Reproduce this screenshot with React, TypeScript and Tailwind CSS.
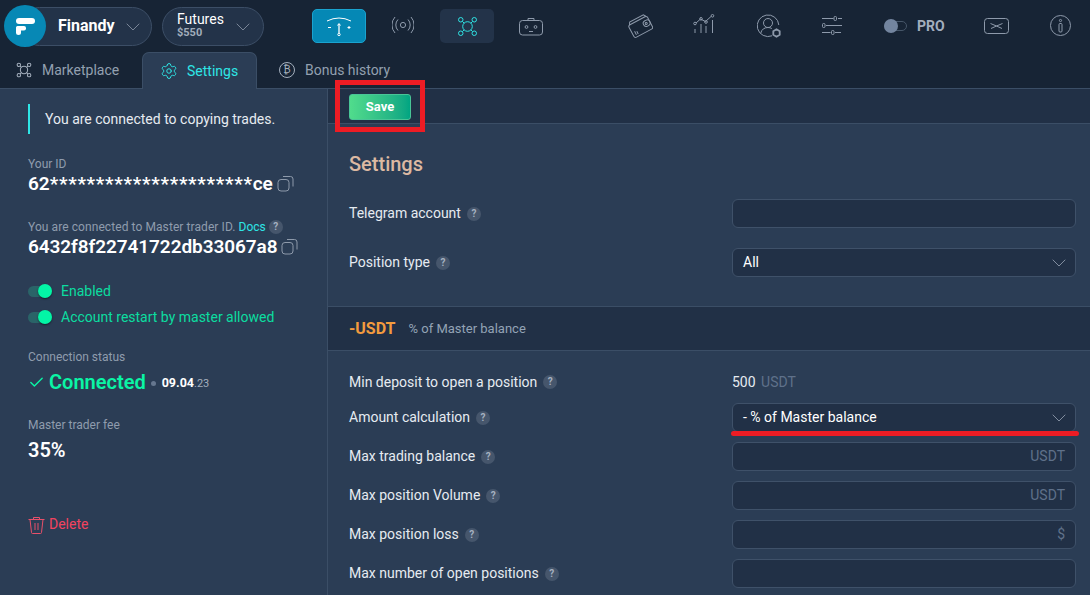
import React from 'react';
import { ChevronDown, Check, Settings as SettingsIcon } from 'lucide-react';

const Help = () => (
  <span className="ml-[6px] inline-flex h-[14px] w-[14px] shrink-0 items-center justify-center rounded-full bg-[#46566c] text-[10px] font-bold leading-none text-[#a5b1c1]">
    ?
  </span>
);

const CopyIcon = () => (
  <svg width="17" height="17" viewBox="0 0 17 17" fill="none" stroke="#8e9aab" strokeWidth="1">
    <rect x="1" y="4.5" width="11" height="11.5" rx="3" />
    <path d="M6 1.5h7.5a2.5 2.5 0 0 1 2.5 2.5v7.5" />
  </svg>
);

const Toggle = () => (
  <span className="relative block h-[11px] w-[24px] shrink-0 rounded-full bg-[#2a6468]">
    <span className="absolute right-0 top-[-2px] h-[14px] w-[14px] rounded-full bg-[#03f5a6] shadow-[0_1px_2px_rgba(0,0,0,0.5)]" />
  </span>
);

const NetIcon = ({ size = 28, color = '#2ee6e6', width = 1.3 }: { size?: number; color?: string; width?: number }) => (
  <svg width={size} height={size} viewBox="0 0 28 28" fill="none" stroke={color} strokeWidth={width}>
    <circle cx="5" cy="5" r="3" />
    <circle cx="23" cy="5" r="3" />
    <circle cx="5" cy="23" r="3" />
    <circle cx="23" cy="23" r="3" />
    <path d="M7.2 7.2 9.5 9.5M20.8 7.2 18.5 9.5M7.2 20.8 9.5 18.5M20.8 20.8 18.5 18.5" />
    <circle cx="14" cy="14" r="6.4" />
  </svg>
);

const FormRow = ({
  label,
  children,
  className = '',
}: {
  label: string;
  children?: React.ReactNode;
  className?: string;
}) => (
  <div className={`flex h-[29px] items-center justify-between ${className}`}>
    <div className="flex items-center text-[14px] text-[#e6ebf1]">
      {label}
      <Help />
    </div>
    <div className="w-[344px]">{children}</div>
  </div>
);

const Field = ({ suffix, children }: { suffix?: string; children?: React.ReactNode }) => (
  <div className="flex h-[29px] items-center justify-between rounded-[6px] border border-[#3f5169] bg-[#213046] px-[10px] text-[14px]">
    <span className="text-white">{children}</span>
    {suffix && <span className="text-[#5f718a]">{suffix}</span>}
  </div>
);

const SelectField = ({ value }: { value: string }) => (
  <div className="flex h-[29px] items-center justify-between rounded-[6px] border border-[#3f5169] bg-[#213046] pl-[10px] pr-[4px] text-[14px] text-white">
    <span>{value}</span>
    <ChevronDown size={24} strokeWidth={0.8} color="#9aa6b6" />
  </div>
);

const TopBar = () => (
  <header className="h-[89px] shrink-0 border-b border-[#3b4e66] bg-[#172435]">
    <div className="flex h-[52px] items-center pl-[4px]">
      <div className="relative z-10 flex h-[42px] w-[42px] shrink-0 items-center justify-center rounded-full bg-[#0788b5]">
        <svg width="19" height="17" viewBox="0 0 19 17" fill="white">
          <rect x="0" y="0" width="19" height="6" rx="3" />
          <rect x="0" y="8" width="10" height="4.5" rx="2" />
          <rect x="0" y="8" width="5" height="9" rx="2.5" />
        </svg>
      </div>
      <div className="ml-[-26px] mt-[1px] flex h-[39px] w-[132px] items-center justify-between rounded-full border border-[#3c4e66] bg-[#233349] pl-[37px] pr-[6px]">
        <span className="mb-[2px] text-[16px] font-bold text-white">Finandy</span>
        <ChevronDown size={24} strokeWidth={0.8} color="#8f9bab" />
      </div>
      <div className="ml-[10px] mt-[1px] flex h-[39px] w-[102px] items-center justify-between rounded-full border border-[#3c4e66] bg-[#233349] pl-[14px] pr-[8px]">
        <div className="mb-[3px] flex flex-col leading-none">
          <span className="text-[14px] text-white">Futures</span>
          <span className="mt-[1px] text-[11px] font-bold text-[#a0acbb]">$550</span>
        </div>
        <ChevronDown size={24} strokeWidth={0.8} color="#8f9bab" />
      </div>
      <div className="ml-[48px] flex h-[34px] w-[54px] items-center justify-center rounded-[5px] border border-[#1aa3cf] bg-[#0588b5]">
        <svg width="28" height="22" viewBox="0 0 28 22" fill="none" stroke="white" strokeWidth="1">
          <path d="M2 6Q14 0 26 6" />
          <path d="M14 9v9" strokeWidth="1.3" />
          <path d="M12.5 10.5 14 8.5l1.5 2" />
          <circle cx="14" cy="19.5" r="1.2" />
          <path d="M3 12.5h3M22.5 12.5h3M24 11v3" />
        </svg>
      </div>
      <div className="mb-[2px] ml-[10px] flex w-[54px] justify-center">
        <svg width="22" height="18" viewBox="0 0 22 18" fill="none" stroke="#8e9aab" strokeWidth="1">
          <circle cx="11" cy="9" r="2.6" />
          <path d="M6 3.5a8 8 0 0 0 0 11M16 3.5a8 8 0 0 1 0 11M3 1a12 12 0 0 0 0 16M19 1a12 12 0 0 1 0 16" />
        </svg>
      </div>
      <div className="ml-[10px] flex h-[34px] w-[54px] items-center justify-center rounded-[5px] bg-[#233349]">
        <NetIcon size={21} width={1.3} />
      </div>
      <div className="ml-[10px] flex w-[54px] justify-center">
        <svg width="24" height="19" viewBox="0 0 24 19" fill="none" stroke="#8e9aab" strokeWidth="1">
          <rect x="0.5" y="3.5" width="23" height="14.5" rx="3" />
          <path d="M9 3.5V1.5h6v2" />
          <circle cx="7.5" cy="10" r="1.4" />
          <circle cx="16.5" cy="10" r="1.4" />
          <path d="M10 14.5h4" />
        </svg>
      </div>
      <div className="ml-[69px] flex w-[26px] justify-center">
        <svg width="25" height="25" viewBox="0 0 25 25" fill="none" stroke="#8e9aab" strokeWidth="1">
          <g transform="rotate(-28 12.5 12.5)">
            <rect x="2" y="6" width="21" height="14" rx="2" />
            <path d="M3.5 6 5 3.5h15.5L22 6" />
            <rect x="16" y="9.5" width="7" height="6" rx="3" />
            <circle cx="19" cy="12.5" r="1" />
            <path d="M5 14v4M7 15v3" />
          </g>
        </svg>
      </div>
      <div className="mb-[4px] ml-[38px] flex w-[26px] justify-center">
        <svg width="22" height="20" viewBox="0 0 22 20" fill="none" stroke="#8e9aab" strokeWidth="1">
          <path d="M3 9 7.5 5 12.5 7.5 18 2.5" />
          <circle cx="2" cy="9.5" r="1.3" />
          <circle cx="8" cy="4.8" r="1.3" />
          <circle cx="13" cy="8" r="1.3" />
          <circle cx="19.5" cy="1.8" r="1.3" />
          <path d="M2 15v4M8 10v9M13 12v7M19.5 6v13" />
        </svg>
      </div>
      <div className="ml-[38px] flex w-[28px] justify-center">
        <svg width="24" height="24" viewBox="0 0 24 24" fill="none" stroke="#8e9aab" strokeWidth="1">
          <path d="M15 21.8A10.8 10.8 0 1 1 21.8 11" />
          <circle cx="11" cy="9" r="4.5" />
          <path d="M3.8 19c.8-3.6 3.6-5.5 7.2-5.5 1.4 0 2.7.3 3.8 1" />
          <path d="M19.5 15.3l3.2 1.9v3.6l-3.2 1.9-3.2-1.9v-3.6Z" strokeWidth="1.8" fill="#172435" />
        </svg>
      </div>
      <div className="mb-[2px] ml-[35px] flex w-[28px] justify-center">
        <svg width="20" height="19" viewBox="0 0 20 19" fill="none" stroke="#8e9aab" strokeWidth="1">
          <path d="M0 2.5h11.5M16 2.5h4M4 9.5h16M0 16.5h8.5M13 16.5h6" />
          <rect x="12" y="0.5" width="2.5" height="4" rx="1" />
          <rect x="0.5" y="7.5" width="2.5" height="4" rx="1" />
          <rect x="9.5" y="14.5" width="2.5" height="4" rx="1" />
        </svg>
      </div>
      <div className="ml-[38px] flex items-center">
        <span className="relative block h-[10px] w-[23px] rounded-full border border-[#465669]">
          <span className="absolute left-[-1px] top-[-3px] h-[14px] w-[14px] rounded-full bg-[#73859f]" />
        </span>
        <span className="ml-[10px] text-[14px] font-bold text-[#a3aebd]">PRO</span>
      </div>
      <div className="ml-[39px] flex w-[26px] justify-center">
        <svg width="25" height="16" viewBox="0 0 25 16" fill="none" stroke="#8e9aab" strokeWidth="1">
          <rect x="0.5" y="0.5" width="24" height="15" rx="3" />
          <path d="M6.5 5.5 12.5 8 18.5 5.5M7 10.5l5.5-2.5 5.5 2.5" />
        </svg>
      </div>
      <div className="mb-[2px] ml-[40px] flex w-[22px] justify-center">
        <svg width="21" height="21" viewBox="0 0 21 21" fill="none" stroke="#8e9aab" strokeWidth="1">
          <circle cx="10.5" cy="10.5" r="10" />
          <circle cx="10.5" cy="5.5" r="1.1" />
          <rect x="9" y="8.5" width="3" height="8.5" rx="1" />
        </svg>
      </div>
    </div>
    <nav className="flex h-[36px] items-end text-[14px] leading-none">
      <div className="flex h-[36px] w-[142px] items-center pl-[16px] text-[#93a0b0]">
        <NetIcon size={16} color="#a5b0be" width={1.8} />
        <span className="ml-[10px]">Marketplace</span>
      </div>
      <div className="relative flex h-[37px] w-[115px] translate-y-px items-center rounded-t-[7px] border border-b-0 border-[#3b4e66] bg-[#2b3d55] pl-[17px] text-[#2ee6e6]">
        <SettingsIcon size={18} strokeWidth={1.3} color="#2ee6e6" />
        <span className="ml-[9px]">Settings</span>
      </div>
      <div className="flex h-[36px] items-center pl-[22px] text-[#93a0b0]">
        <span className="flex h-[16px] w-[16px] items-center justify-center rounded-full border border-[#a5b0be] text-[10px] leading-none text-[#a5b0be]">
          ₿
        </span>
        <span className="ml-[10px]">Bonus history</span>
      </div>
    </nav>
  </header>
);

const Sidebar = () => (
  <aside className="w-[328px] shrink-0 border-r border-[#3b4e66] bg-[#2b3d55] pl-[28px] pt-[15px]">
    <div className="flex h-[30px] items-center border-l-2 border-[#2ee6e6] pl-[15px] text-[14px] text-[#e6ebf1]">
      You are connected to copying trades.
    </div>
    <div className="mt-[23px] text-[12px] leading-[14px] text-[#8f9cad]">Your ID</div>
    <div className="mt-[1px] flex h-[22px] items-center text-[19px] font-semibold leading-none text-white">
      62<span className="tracking-[0.7px]">**********************</span>ce
      <span className="ml-[4px]">
        <CopyIcon />
      </span>
    </div>
    <div className="mt-[26px] flex items-center text-[12px] leading-[14px] text-[#8f9cad]">
      <span className="tracking-[0.08px]">You are connected to Master trader ID.</span>
      <span className="ml-[3px] mr-[-3px] text-[#2ee6e6]">Docs</span>
      <Help />
    </div>
    <div className="mt-[1px] flex h-[22px] items-center text-[19px] font-semibold leading-none tracking-[-0.08px] text-white">
      6432f8f22741722db33067a8
      <span className="ml-[4px]">
        <CopyIcon />
      </span>
    </div>
    <div className="mt-[21px] flex h-[26px] items-center gap-[9px] text-[14px] text-[#0bdda0]">
      <Toggle />
      Enabled
    </div>
    <div className="flex h-[26px] items-center gap-[9px] text-[14px] text-[#0bdda0]">
      <Toggle />
      Account restart by master allowed
    </div>
    <div className="mt-[20px] text-[12px] leading-[14px] text-[#8f9cad]">Connection status</div>
    <div className="mt-[6px] flex h-[24px] items-center">
      <Check size={17} strokeWidth={2} color="#0af5a5" />
      <span className="ml-[4px] text-[20px] font-semibold leading-none text-[#0af5a5]">Connected</span>
      <span className="ml-[5px] mt-[2px] h-[5px] w-[5px] rounded-full bg-[#66778f]" />
      <span className="ml-[6px] mt-[3px] text-[12.5px] font-bold text-white">
        09.04<span className="text-[11px] font-normal text-[#a3aebd]">.23</span>
      </span>
    </div>
    <div className="mt-[24px] text-[12px] leading-[14px] text-[#8f9cad]">Master trader fee</div>
    <div className="mt-[6px] text-[20px] font-semibold leading-[24px] text-white">35%</div>
    <div className="mt-[52px] flex items-center text-[14px] text-[#f2435f]">
      <svg width="17" height="18" viewBox="0 0 17 18" fill="none" stroke="#e8506a" strokeWidth="1">
        <path d="M0.5 3.5h16M5.5 3.5V1.5h6v2M2 3.5l1.5 13a1 1 0 0 0 1 1h8a1 1 0 0 0 1-1l1.5-13M7 7v7M10 7v7" />
      </svg>
      <span className="ml-[4px]">Delete</span>
    </div>
  </aside>
);

export default function App() {
  return (
    <div className="relative flex h-[595px] w-[1090px] flex-col overflow-hidden bg-[#2b3d55] font-['Roboto',sans-serif]">
      <TopBar />
      <div className="flex min-h-0 flex-1">
        <Sidebar />
        <main className="min-w-0 flex-1">
          <div className="flex h-[35px] items-center border-b border-[#3b4e66] bg-[#213046] pl-[21px] pt-[1px]">
            <button className="flex h-[26px] w-[62px] items-center justify-center rounded-[3px] border border-[#49c597] bg-gradient-to-r from-[#50dc8c] to-[#00a582] text-[13px] font-bold text-white">
              Save
            </button>
          </div>
          <div className="pl-[21px] pr-[14px]">
            <h2 className="mt-[26px] text-[20px] font-medium leading-[28px] text-[#dcb9a2]">Settings</h2>
            <FormRow label="Telegram account" className="mt-[21px]">
              <Field />
            </FormRow>
            <FormRow label="Position type" className="mt-[20px]">
              <SelectField value="All" />
            </FormRow>
          </div>
          <div className="mt-[29px] flex h-[45px] items-center border-y border-[#3b4e66] bg-[#213046] pl-[21px]">
            <span className="text-[16px] font-bold text-[#f39b3e]">-USDT</span>
            <span className="ml-[13px] text-[13px] text-[#93a3b5]">% of Master balance</span>
          </div>
          <div className="flex flex-col gap-[10px] pl-[21px] pr-[14px] pt-[20px]">
            <div className="flex h-[22px] items-center justify-between">
              <div className="flex items-center text-[14px] text-[#e6ebf1]">
                Min deposit to open a position
                <Help />
              </div>
              <div className="w-[344px] text-[14px] text-[#e6ebf1]">
                500 <span className="ml-[2px] text-[#5f718a]">USDT</span>
              </div>
            </div>
            <FormRow label="Amount calculation">
              <SelectField value="- % of Master balance" />
            </FormRow>
            <FormRow label="Max trading balance">
              <Field suffix="USDT" />
            </FormRow>
            <FormRow label="Max position Volume">
              <Field suffix="USDT" />
            </FormRow>
            <FormRow label="Max position loss">
              <Field suffix="$" />
            </FormRow>
            <FormRow label="Max number of open positions">
              <Field />
            </FormRow>
          </div>
        </main>
      </div>
      {/* annotation marks */}
      <div className="absolute left-[335px] top-[80px] h-[52px] w-[90px] border-[5px] border-[#ed1c24]" />
      <div className="absolute left-[731px] top-[431px] h-[5px] w-[348px] rounded-full bg-[#ed1c24]" />
    </div>
  );
}
